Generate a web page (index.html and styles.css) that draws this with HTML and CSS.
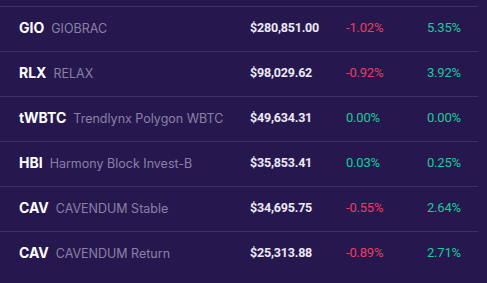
FILE: index.html
```html
<!DOCTYPE html>
<html>
<head>
<meta charset="utf-8">
<link rel="stylesheet" href="styles.css">
</head>
<body>
<div class="table">
  <div class="row">
    <div class="asset"><span class="sym">GIO</span><span class="name">GIOBRAC</span></div>
    <div class="price">$280,851.00</div>
    <div class="chg neg">-1.02%</div>
    <div class="chg pos">5.35%</div>
  </div>
  <div class="row">
    <div class="asset"><span class="sym">RLX</span><span class="name">RELAX</span></div>
    <div class="price">$98,029.62</div>
    <div class="chg neg">-0.92%</div>
    <div class="chg pos">3.92%</div>
  </div>
  <div class="row">
    <div class="asset"><span class="sym">tWBTC</span><span class="name">Trendlynx Polygon WBTC</span></div>
    <div class="price">$49,634.31</div>
    <div class="chg pos">0.00%</div>
    <div class="chg pos">0.00%</div>
  </div>
  <div class="row">
    <div class="asset"><span class="sym">HBI</span><span class="name">Harmony Block Invest-B</span></div>
    <div class="price">$35,853.41</div>
    <div class="chg pos">0.03%</div>
    <div class="chg pos">0.25%</div>
  </div>
  <div class="row">
    <div class="asset"><span class="sym">CAV</span><span class="name">CAVENDUM Stable</span></div>
    <div class="price">$34,695.75</div>
    <div class="chg neg">-0.55%</div>
    <div class="chg pos">2.64%</div>
  </div>
  <div class="row">
    <div class="asset"><span class="sym">CAV</span><span class="name">CAVENDUM Return</span></div>
    <div class="price">$25,313.88</div>
    <div class="chg neg">-0.89%</div>
    <div class="chg pos">2.71%</div>
  </div>
</div>
</body>
</html>
```
FILE: styles.css
```css
html, body {
  margin: 0;
  padding: 0;
  background: #26184e;
}
body {
  font-family: Inter, "Noto Sans", sans-serif;
  font-size: 13px;
  padding-top: 6px;
}
.table {
  width: 478px;
}
.row {
  display: grid;
  grid-template-columns: 250px 96px 81px 1fr;
  align-items: center;
  height: 44px;
  box-sizing: content-box;
  border-top: 1px solid #3c3064;
}
.asset {
  padding-left: 19px;
  padding-bottom: 4px;
  display: flex;
  align-items: baseline;
  gap: 7px;
}
.sym {
  color: #ffffff;
  font-weight: 700;
  font-size: 14px;
}
.name {
  color: #8a80a6;
  font-size: 12.5px;
}
.price, .chg {
  font-family: Roboto, "Liberation Sans", sans-serif;
  padding-bottom: 4px;
}
.price {
  color: #ece9f4;
  font-weight: 700;
  font-size: 12.5px;
  letter-spacing: -0.2px;
}
.chg {
  font-size: 13px;
  letter-spacing: -0.2px;
}
.neg { color: #ee3b60; }
.pos { color: #18cc9d; }
```
